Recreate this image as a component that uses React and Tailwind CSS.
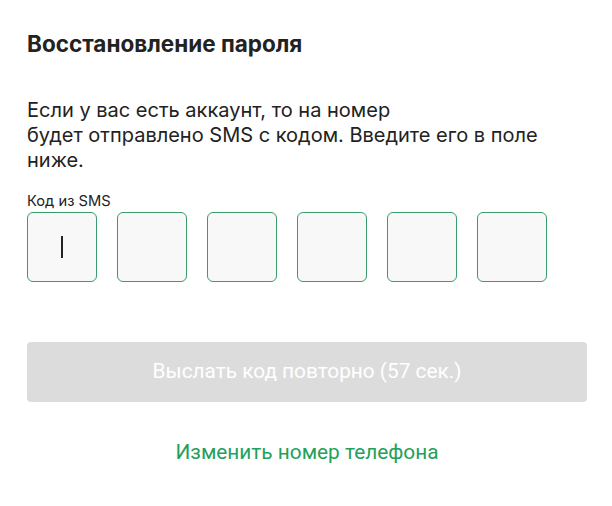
export default function App() {
  const boxes = [0, 1, 2, 3, 4, 5];
  return (
    <div className="w-[612px] h-[506px] bg-white font-['Inter',sans-serif] text-[#222222]">
      <div className="pl-[27px] pr-[25px] pt-[30px]">
        <h1 className="text-[22.5px] leading-[28px] font-bold">Восстановление пароля</h1>
        <p className="mt-[40px] text-[20px] leading-[25px] w-[560px]">
          Если у вас есть аккаунт, то на номер
          <br />
          будет отправлено SMS с кодом. Введите его в поле ниже.
        </p>
        <div className="mt-[19px] text-[14.7px] leading-[18px]">Код из SMS</div>
        <div className="mt-[2px] flex gap-[20px]">
          {boxes.map((i) => (
            <div
              key={i}
              className="w-[70px] h-[70px] rounded-[6px] border border-[#3a9b6b] bg-[#f8f8f8] flex items-center justify-center"
            >
              {i === 0 && <div className="w-[1.5px] h-[22px] bg-[#222]" />}
            </div>
          ))}
        </div>
        <button className="mt-[60px] w-[560px] h-[60px] rounded-[4px] bg-[#dcdcdc] text-white text-[20.8px] font-['Roboto',sans-serif] flex items-center justify-center">
          Выслать код повторно (57 сек.)
        </button>
        <div className="mt-[38px] w-[560px] text-center text-[#23a05a] text-[20.8px] leading-[24px] font-['Roboto',sans-serif]">
          Изменить номер телефона
        </div>
      </div>
    </div>
  );
}
